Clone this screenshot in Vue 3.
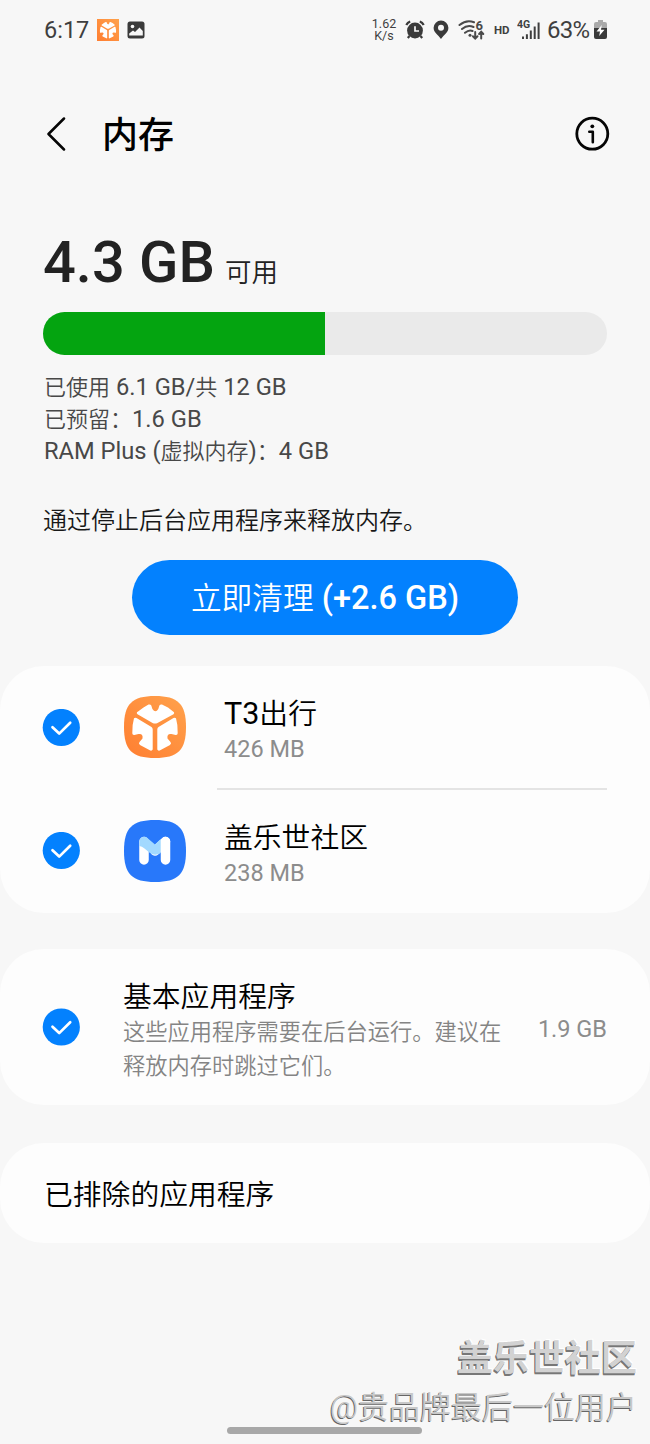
<script setup>
const runs = (text) =>
  text.match(/[\x00-\xff]+|[^\x00-\xff]+/g).map((value) => ({
    value,
    kind: value.charCodeAt(0) > 255 ? 'han' : 'latin',
  }))

const details = ['已使用 6.1 GB/共 12 GB', '已预留：1.6 GB', 'RAM Plus (虚拟内存)：4 GB'].map(runs)
const action = runs('立即清理 (+2.6 GB)')
const apps = [
  { id: 't3', name: runs('T3出行'), size: '426 MB' },
  { id: 'members', name: runs('盖乐世社区'), size: '238 MB' },
]
const used = 50
</script>

<template>
  <div class="screen">
    <svg class="defs" width="0" height="0" aria-hidden="true">
      <defs>
        <linearGradient id="orange" x1="0" y1="1" x2="1" y2="0">
          <stop offset="0" stop-color="#ff7e31" />
          <stop offset="1" stop-color="#ffa24c" />
        </linearGradient>
        <g id="t3mark">
          <path d="M13 16.3 19.5 11.5 24.500 8.500Q26.500 8 27.300 9.500L28.400 13Q31.500 17.500 34.300 13L35.400 9.500Q36.300 8 38 8.500L44 11.500 50 16.300Q50.500 17.400 49.500 18.200L33 27.200Q31 28 29 27.200L13.500 18.200Q12.300 17.400 13 16.300Z" />
          <path d="M10 22.200Q11.200 21.400 12.500 22L27.500 31Q28.700 31.800 28.700 33.500V53.500Q28 55 26.300 54.500L16 49Q14.200 47.500 15.500 46L18.500 42.500Q19.300 37.200 14.500 38L10.300 39Q8.300 39.200 8.300 37.300Q8 29 10 22.200Z" />
          <path d="M52 22.200Q50.800 21.400 49.500 22L34.500 31Q33.300 31.800 33.300 33.500V53.500Q34 55 35.700 54.500L46 49Q47.800 47.500 46.500 46L43.500 42.500Q42.700 37.200 47.500 38L51.700 39Q53.700 39.200 53.700 37.300Q54 29 52 22.200Z" />
        </g>
      </defs>
    </svg>

    <div class="status">
      <span class="clock">6:17</span>
      <svg class="s-t3" width="22" height="22" viewBox="0 0 62 62">
        <rect width="62" height="62" fill="url(#orange)" />
        <use href="#t3mark" fill="#fff" />
      </svg>
      <svg class="s-pic" width="18" height="18" viewBox="0 0 18 18">
        <rect x=".5" y=".5" width="17" height="17" rx="2.500" fill="#3a3a3a" />
        <circle cx="5.500" cy="5.500" r="1.800" fill="#f7f7f7" />
        <path d="M2.200 14.500V12.500L6 9.500 8 11 12.500 6.500 15.800 10V14.500Z" fill="#f7f7f7" />
      </svg>
      <svg class="rate" width="26" height="24" viewBox="0 0 26 24">
        <text text-anchor="middle"><tspan x="13" y="10">1.62</tspan><tspan x="13" y="21.500">K/s</tspan></text>
      </svg>
      <svg class="s-alarm" width="20" height="20" viewBox="0 0 20 20" fill="none" stroke="#3a3a3a">
        <circle cx="10" cy="10.500" r="7.900" fill="#3a3a3a" stroke="none" />
        <path d="M1.300 5Q2.500 2.500 5.200 1.500M18.700 5Q17.500 2.500 14.800 1.500M4.500 16 2.800 18M15.500 16 17.200 18" stroke-width="2.200" />
        <path d="M10 6.200V11H14" stroke="#f7f7f7" stroke-width="1.700" />
      </svg>
      <svg class="s-pin" width="16" height="20" viewBox="0 0 16 20">
        <path fill-rule="evenodd" d="M8 .5A7.400 7.400 0 0 0 .6 7.800C.6 12.500 5 14.800 8 19 11 14.800 15.400 12.500 15.400 7.800A7.400 7.400 0 0 0 8 .5ZM8 4.700A3 3 0 1 1 8 10.700 3 3 0 0 1 8 4.700Z" fill="#3a3a3a" />
      </svg>
      <svg class="s-wifi" width="28" height="22" viewBox="0 0 28 22" fill="none" stroke="#4a4a4a" stroke-width="2" stroke-linecap="round">
        <path d="M1.500 6Q8.500 .3 16 3.300M4 10Q9.500 5.300 15.500 8M7 13.800Q11 10.500 14.500 12" />
        <circle cx="12" cy="16.300" r="1.500" fill="#4a4a4a" stroke="none" />
        <path d="M17.200 13V19M14.900 17.200 17.200 19.500 19.500 17.200M23.200 19.500V13M21.100 15 23.200 12.800 25.300 15" />
        <text x="17.500" y="10.800" class="six">6</text>
      </svg>
      <span class="hd">HD</span>
      <svg class="s-signal" width="24" height="22" viewBox="0 0 24 22">
        <text x="0" y="9" class="fourg">4G</text>
        <path d="M5 17.500h2V20H5ZM8.900 15.200h2V20h-2ZM12.800 11.500h2V20h-2ZM16.700 7.500h2V20h-2ZM20.600 3.500h2V20h-2Z" fill="#3f3f3f" />
      </svg>
      <span class="percent">63%</span>
      <svg class="s-battery" width="13" height="20" viewBox="0 0 13 20">
        <path d="M4 0H9V2H11Q13 2 13 4V8H0V4Q0 2 2 2H4Z" fill="#aaa" />
        <path d="M0 8H13V17Q13 19 11 19H2Q0 19 0 17Z" fill="#3a3a3a" />
        <path d="M7.800 5 2.500 11.500H6L5.200 16 10.500 9.700H7Z" fill="#fff" />
      </svg>
    </div>

    <header class="bar">
      <svg class="back" width="20" height="34" viewBox="0 0 20 34" fill="none" stroke="#050505" stroke-width="2.500" stroke-linecap="round" stroke-linejoin="round">
        <path d="M18 1.500 2.500 17 18 32.500" />
      </svg>
      <h1>内存</h1>
      <svg class="info" width="36" height="36" viewBox="0 0 36 36" fill="none" stroke="#050505">
        <circle cx="18.300" cy="17.700" r="15.500" stroke-width="2.800" />
        <circle cx="18.300" cy="10.300" r="1.900" fill="#050505" stroke="none" />
        <path d="M15.300 15.800H18.800V26.300" stroke-width="2.600" stroke-linecap="round" stroke-linejoin="round" />
      </svg>
    </header>

    <section class="summary">
      <div class="free"><strong>4.3 GB</strong><span>可用</span></div>
      <div class="meter"><div class="fill" :style="{ width: used + '%' }"></div></div>
      <div class="details">
        <div v-for="(line, i) in details" :key="i" class="mixed">
          <span v-for="(r, j) in line" :key="j" :class="r.kind">{{ r.value }}</span>
        </div>
      </div>
      <p class="hint">通过停止后台应用程序来释放内存。</p>
      <button class="clean mixed">
        <span v-for="(r, j) in action" :key="j" :class="r.kind">{{ r.value }}</span>
      </button>
    </section>

    <section class="card apps">
      <div v-for="app in apps" :key="app.id" class="app">
        <svg class="check" width="38" height="38" viewBox="0 0 38 38">
          <circle cx="19.300" cy="18.500" r="18.600" fill="#0381fe" />
          <path d="M10.500 18.200 17.200 24.600 28.200 13.800" fill="none" stroke="#fff" stroke-width="2.700" stroke-linecap="round" stroke-linejoin="round" />
        </svg>
        <svg v-if="app.id === 't3'" class="logo" width="62" height="62" viewBox="0 0 62 62">
          <path d="M31 0C54 0 62 8 62 31S54 62 31 62 0 54 0 31 8 0 31 0Z" fill="url(#orange)" />
          <use href="#t3mark" fill="#fff" />
        </svg>
        <svg v-else class="logo" width="62" height="62" viewBox="0 0 62 62">
          <path d="M31 0C54 0 62 8 62 31S54 62 31 62 0 54 0 31 8 0 31 0Z" fill="#2878fa" />
          <path d="M20 21.500V40M41.500 21.500V40" fill="none" stroke="#fff" stroke-width="9.500" stroke-linecap="round" />
          <path d="M41.500 21.500 31 31" fill="none" stroke="#fff" stroke-width="9.500" stroke-linecap="round" />
          <path d="M15.300 24V21.500A4.800 4.800 0 0 1 22.800 17.600L31 24.400 36.700 19V33Q31 36.500 26 33L20.500 28.500Q18 26 15.300 26Z" fill="#a2d9ff" />
        </svg>
        <div class="label">
          <div class="name mixed"><span v-for="(r, j) in app.name" :key="j" :class="r.kind">{{ r.value }}</span></div>
          <div class="size">{{ app.size }}</div>
        </div>
      </div>
    </section>

    <section class="card basic">
      <svg class="check" width="38" height="38" viewBox="0 0 38 38">
        <circle cx="19.300" cy="19" r="18.600" fill="#0381fe" />
        <path d="M10.500 18.700 17.200 25.100 28.200 14.300" fill="none" stroke="#fff" stroke-width="2.700" stroke-linecap="round" stroke-linejoin="round" />
      </svg>
      <div class="about">
        <div class="heading">基本应用程序</div>
        <p>这些应用程序需要在后台运行。建议在<br />释放内存时跳过它们。</p>
      </div>
      <span class="amount">1.9 GB</span>
    </section>

    <section class="card excluded">已排除的应用程序</section>

    <footer>
      <div class="mark">盖乐世社区</div>
      <div class="user">@贵品牌最后一位用户</div>
      <div class="handle"></div>
    </footer>
  </div>
</template>

<style>
body {
  background: #f7f7f7;
}
</style>

<style scoped>
.screen {
  position: relative;
  width: 650px;
  height: 1444px;
  overflow: hidden;
  background: #f7f7f7;
  color: #000;
  font-family: Roboto, "Noto Sans CJK SC", sans-serif;
}
.screen * {
  box-sizing: border-box;
}
svg {
  display: block;
  flex: none;
}
.defs {
  position: absolute;
}
.mixed {
  display: flex;
  align-items: baseline;
  white-space: pre;
}
.han {
  font-weight: 350;
}
.status {
  display: flex;
  align-items: center;
  height: 60px;
  padding-left: 44px;
  color: #3f3f3f;
}
.clock {
  width: 53px;
  font-size: 23.500px;
  line-height: 30px;
}
.s-pic { margin-left: 8px; }
.rate {
  margin-left: 226px;
  font-size: 12.500px;
  fill: #3f3f3f;
}
.s-alarm { margin-left: 8px; }
.s-pin { margin-left: 8px; }
.s-wifi { margin-left: 9px; }
.six {
  font: 700 13px Roboto, sans-serif;
  fill: #4a4a4a;
  stroke: none;
}
.hd {
  width: 17px;
  margin-left: 8px;
  font-size: 11.500px;
  font-weight: 700;
  line-height: 14px;
}
.s-signal { margin-left: 6px; }
.fourg {
  font: 700 10.500px Roboto, sans-serif;
  fill: #3f3f3f;
}
.percent {
  width: 45px;
  margin-left: 6px;
  font-size: 24px;
  line-height: 28px;
  letter-spacing: -0.8px;
}
.s-battery { margin-left: 2px; }
.bar {
  display: flex;
  align-items: center;
  height: 148px;
  padding: 0 40px 0 46px;
}
h1 {
  margin: 0 auto 0 36px;
  padding-top: 3px;
  font-size: 36px;
  font-weight: 500;
  line-height: 50px;
}
.summary {
  display: flex;
  flex-direction: column;
  height: 458px;
  padding: 22px 43px 0;
}
.free {
  display: flex;
  align-items: baseline;
  height: 82px;
  color: #222;
}
.free strong {
  font-size: 57.800px;
  font-weight: 500;
  line-height: 65px;
}
.free span {
  margin-left: 10px;
  font-size: 26.500px;
  font-weight: 350;
  line-height: 30px;
}
.meter {
  height: 43px;
  overflow: hidden;
  border-radius: 22px;
  background: #eaeaea;
}
.fill {
  height: 100%;
  background: #04a410;
}
.details {
  margin-top: 16px;
  padding-left: 1px;
  color: #484848;
}
.details .mixed {
  height: 32px;
  line-height: 32px;
}
.details .latin { font-size: 23.700px; }
.details .han { font-size: 22px; }
.hint {
  margin: 36px 0 0;
  font-size: 24px;
  font-weight: 350;
  line-height: 36px;
  color: #181818;
}
.clean {
  justify-content: center;
  align-self: center;
  width: 386px;
  height: 75px;
  margin-top: 21px;
  padding: 0;
  border: 0;
  border-radius: 38px;
  background: #0381fe;
  color: #fff;
  font-family: inherit;
  line-height: 77px;
}
.clean .han { font-size: 30.700px; }
.clean .latin {
  font-size: 32.500px;
  font-weight: 500;
}
.card {
  background: #fdfdfd;
  border-radius: 44px;
}
.apps {
  height: 247px;
}
.app {
  position: relative;
  display: flex;
  align-items: center;
  height: 123.500px;
  padding-left: 42px;
}
.app:first-child::after {
  content: "";
  position: absolute;
  left: 217px;
  right: 43px;
  bottom: 0;
  height: 2px;
  background: #e4e4e4;
}
.logo {
  margin-left: 44px;
  margin-bottom: 1px;
}
.label {
  margin-left: 38px;
  padding-top: 4px;
}
.name {
  height: 39px;
  line-height: 40px;
}
.name .latin { font-size: 30.500px; }
.name .han { font-size: 28.800px; }
.size {
  height: 32px;
  font-size: 23.500px;
  line-height: 32px;
  color: #8c8c8c;
}
.basic {
  display: flex;
  align-items: center;
  height: 156px;
  margin-top: 36px;
  padding: 0 43px 0 42px;
}
.about {
  margin-left: 43px;
  padding-top: 8px;
}
.heading {
  font-size: 28.800px;
  font-weight: 350;
  line-height: 36px;
}
.about p {
  margin: 0;
  font-size: 22.250px;
  font-weight: 350;
  line-height: 34px;
  white-space: nowrap;
  color: #848484;
}
.amount {
  margin-left: auto;
  padding-top: 3px;
  font-size: 23.500px;
  white-space: nowrap;
  color: #8c8c8c;
}
.excluded {
  height: 100px;
  margin-top: 38px;
  padding-left: 44px;
  font-size: 28.800px;
  font-weight: 350;
  line-height: 104px;
}
footer {
  display: flex;
  flex-direction: column;
  align-items: flex-end;
  height: 201px;
  padding: 90px 13px 0 0;
}
.mark {
  font-size: 36px;
  font-weight: 700;
  line-height: 53px;
  color: #d2d2d2;
  text-shadow: -1px 1px 0 #777, -1px 2px 0 #777, 1px -1px 0 #fff;
}
.user {
  font-size: 31px;
  font-weight: 350;
  line-height: 44px;
  color: #c8c8c8;
  text-shadow: -1px 1px 0 #666;
}
.handle {
  align-self: flex-start;
  width: 195px;
  height: 7px;
  margin: -3px 0 0 227px;
  border-radius: 4px;
  background: #a8a8a8;
}
</style>
